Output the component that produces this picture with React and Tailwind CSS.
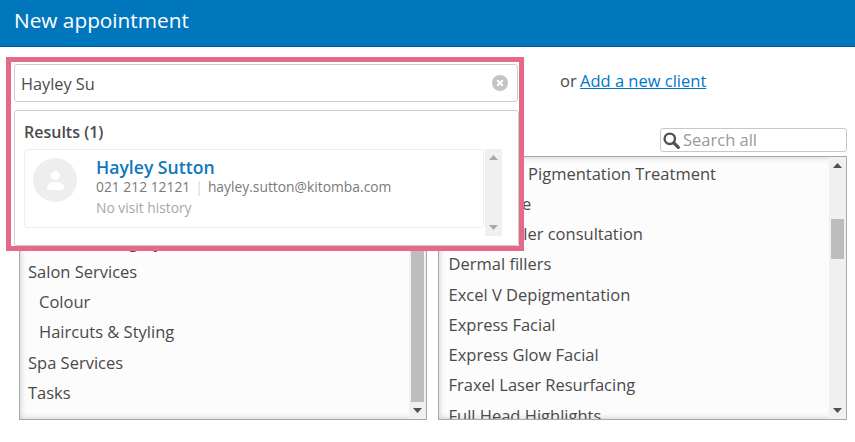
import React from "react";

const leftItems = [
    { name: "Beauty Therapy", indent: false },
    { name: "Body Treatments", indent: false },
    { name: "Cosmetic Surgery", indent: false },
    { name: "Salon Services", indent: false },
    { name: "Colour", indent: true },
    { name: "Haircuts & Styling", indent: true },
    { name: "Spa Services", indent: false },
    { name: "Tasks", indent: false },
];

const rightItems = [
    "Advanced Pigmentation Treatment",
    "Dermalase",
    "Dermal filler consultation",
    "Dermal fillers",
    "Excel V Depigmentation",
    "Express Facial",
    "Express Glow Facial",
    "Fraxel Laser Resurfacing",
    "Full Head Highlights",
];

const ScrollArrow = ({ down, color }) => (
    <svg width="9" height="5" viewBox="0 0 9 5" className="block">
        <path d={down ? "M0 0H9L4.5 5Z" : "M0 5H9L4.5 0Z"} fill={color} />
    </svg>
);

const Scrollbar = ({ thumb, arrow }) => (
    <div className="w-[17px] h-full shrink-0 bg-[#f0f0f0] flex flex-col items-center">
        <div className="h-[17px] flex items-center justify-center">
            <ScrollArrow color={arrow} />
        </div>
        <div className="flex-1 w-full px-[2px]">{thumb}</div>
        <div className="h-[17px] flex items-center justify-center">
            <ScrollArrow down color={arrow} />
        </div>
    </div>
);

const ListBox = ({ children, thumb, className }) => (
    <div className={`h-[264px] border border-[#a9a9a9] bg-[#fcfcfc] flex overflow-hidden shadow-[inset_0_0_6px_rgba(0,0,0,0.22)] ${className}`}>
        <div className="flex-1 overflow-hidden">{children}</div>
        <Scrollbar thumb={thumb} arrow="#505050" />
    </div>
);

export default function App() {
    return (
        <div className="relative w-[855px] h-[442px] overflow-hidden bg-white text-[16.5px] text-[#4a4a4a] font-['Open_Sans',sans-serif]">
            <header className="h-[47px] bg-[#0077bd] border-b border-[#005a8f] pl-[14px] pb-[4px] flex items-center text-[20.8px] text-white">
                New appointment
            </header>

            <div className="pl-[19px] pr-[8px]">
                <div className="h-[81px] pl-[541px] pt-[23px] leading-[22px]">
                    or{" "}
                    <a href="#" className="text-[#0077c8] underline -ml-[1px]">
                        Add a new client
                    </a>
                </div>

                <div className="flex justify-end">
                    <div className="w-[187px] h-[24px] border border-[#c8c8c8] rounded-[3px] bg-white flex items-center pl-[2px] text-[#999999]">
                        <svg width="17" height="17" viewBox="0 0 17 17" fill="none" stroke="#505050" className="shrink-0">
                            <circle cx="6.8" cy="6.8" r="5.2" strokeWidth="2.4" />
                            <path d="M10.8 10.8L15.3 15.3" strokeWidth="3.2" strokeLinecap="round" />
                        </svg>
                        <span className="ml-[3px]">Search all</span>
                    </div>
                </div>

                <div className="flex gap-[11px] mt-[4px]">
                    <ListBox className="w-[408px]" thumb={<div className="h-full bg-[#bdbdbd]" />}>
                        <ul className="pt-[9.2px] pl-[8px]">
                            {leftItems.map((item) => (
                                <li
                                    key={item.name}
                                    className={`h-[30.25px] leading-[30.25px] whitespace-nowrap ${item.indent ? "pl-[11px]" : ""}`}
                                >
                                    {item.name}
                                </li>
                            ))}
                        </ul>
                    </ListBox>
                    <ListBox
                        className="w-[409px]"
                        thumb={
                            <div className="pt-[45px]">
                                <div className="h-[40px] bg-[#bdbdbd]" />
                            </div>
                        }
                    >
                        <ul className="pt-[1.7px] pl-[9.5px]">
                            {rightItems.map((item) => (
                                <li key={item} className="h-[30.25px] leading-[30.25px] whitespace-nowrap">
                                    {item}
                                </li>
                            ))}
                        </ul>
                    </ListBox>
                </div>
            </div>

            {/* highlighted search dropdown sits over the lists */}
            <div className="absolute left-[6px] top-[57px] w-[518px] h-[194px] border-[5px] border-[#e56a8a] bg-white pl-[3px] pt-[2px]">
                <div className="h-[38px] mr-[1px] border border-[#cccccc] rounded-[3px] flex items-center pl-[6px] pr-[9px] justify-between">
                    <span className="pt-[2px] text-[16.3px]">Hayley Su</span>
                    <svg width="16" height="16" viewBox="0 0 16 16">
                        <circle cx="8" cy="8" r="8" fill="#c4c4c4" />
                        <path d="M5.2 5.2L10.8 10.8M10.8 5.2L5.2 10.8" stroke="#ffffff" strokeWidth="2" />
                    </svg>
                </div>
                <div className="mt-[8px] h-[136px] border border-[#cccccc] rounded-[3px] pl-[9px] pt-[10px]">
                    <div className="font-semibold text-[16px] leading-[22px]">Results (1)</div>
                    <div className="flex mt-[6px] h-[87px]">
                        <div className="w-[460px] h-[79px] border border-[#eeeeee] rounded-[3px] flex pl-[8px] pt-[8px]">
                            <div className="w-[44px] h-[44px] rounded-full bg-[#eeeeee] flex items-center justify-center shrink-0">
                                <svg width="17" height="19" viewBox="0 0 17 19" fill="#ffffff">
                                    <circle cx="8.5" cy="4.5" r="4.5" />
                                    <path d="M0 16.5C0 13 3.5 11 8.5 11C13.5 11 17 13 17 16.5C17 18 16 19 14.5 19H2.5C1 19 0 18 0 16.5Z" />
                                </svg>
                            </div>
                            <div className="ml-[19px] -mt-[1px]">
                                <div className="font-semibold text-[#0f77bd] text-[17.6px] leading-[20px]">
                                    Hayley Sutton
                                </div>
                                <div className="text-[13.85px] text-[#7a7a7a] leading-[20px]">
                                    021 212 12121
                                    <span className="text-[#cfd8e0] mx-[5px]">|</span>
                                    hayley.sutton@kitomba.com
                                </div>
                                <div className="text-[13.8px] text-[#a8a8a8] leading-[20px] pt-[1px]">
                                    No visit history
                                </div>
                            </div>
                        </div>
                        <div className="ml-[1px]">
                            <Scrollbar arrow="#a8a8a8" />
                        </div>
                    </div>
                </div>
            </div>
        </div>
    );
}
